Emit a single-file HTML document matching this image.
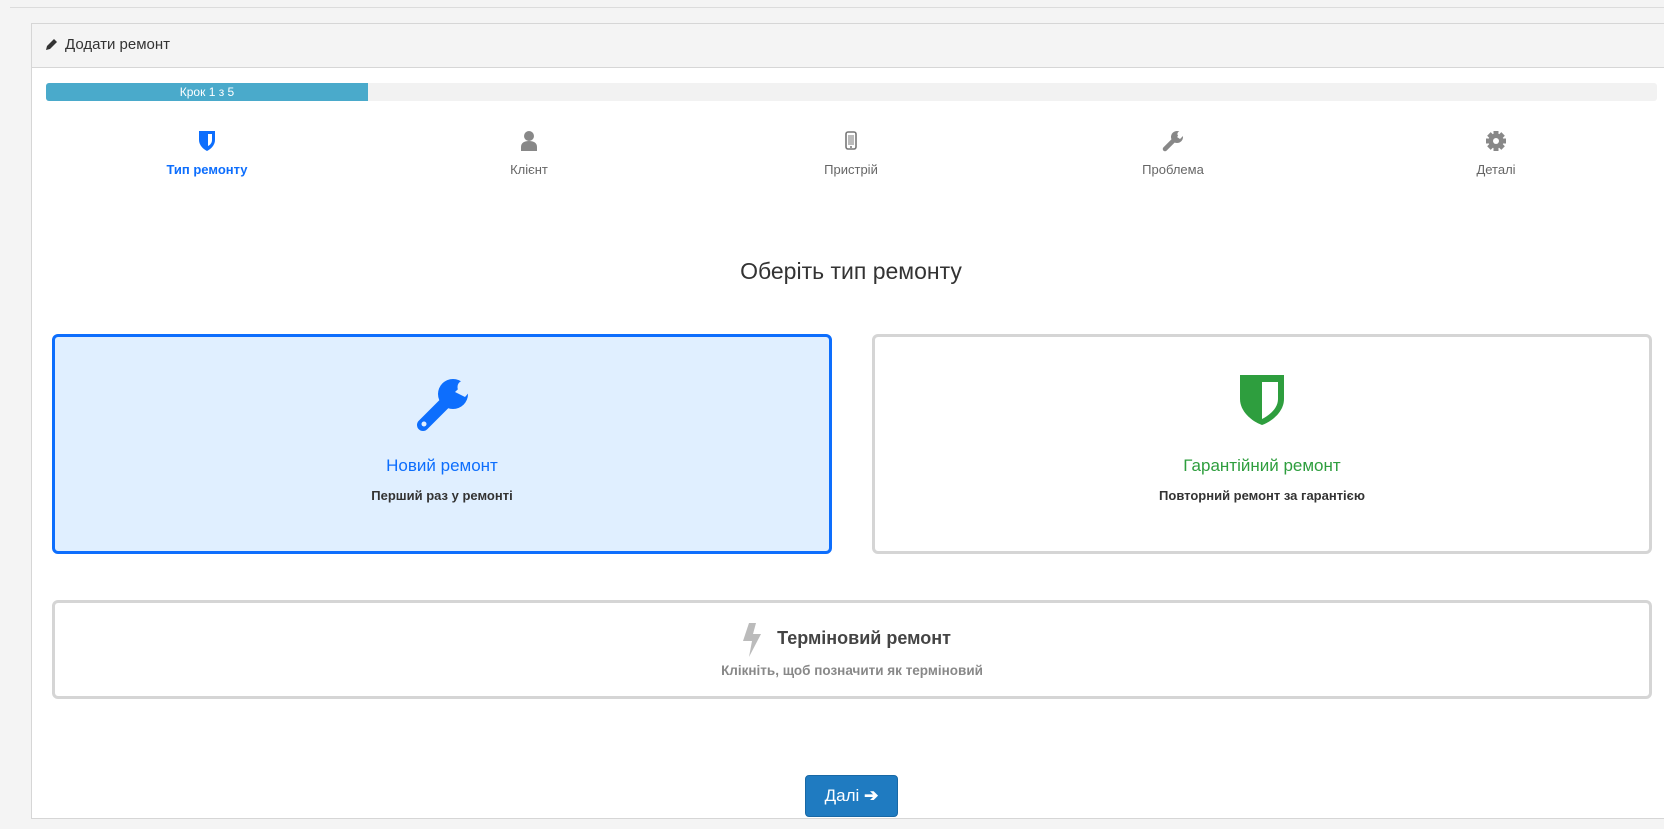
<!DOCTYPE html>
<html><head><meta charset="utf-8"><style>
*{box-sizing:border-box;margin:0;padding:0}
body{width:1664px;height:829px;background:#f4f4f4;font-family:"Liberation Sans",sans-serif;position:relative;overflow:hidden;color:#333}
.topline{position:absolute;left:10px;top:7px;right:0;height:1px;background:#dcdcdc}
.panel{position:absolute;left:31px;top:23px;width:1700px;height:796px;border:1px solid #d6d6d6;background:#fff}
.hdr{height:44px;background:#f4f4f4;border-bottom:1px solid #d6d6d6;font-size:15px;padding:12px 0 0 33px;color:#333}
.hdr svg{position:absolute;left:13px;top:14px}
.abs{position:absolute}
.prog{left:46px;top:83px;width:1611px;height:18px;background:#f2f2f2;border-radius:3px;overflow:hidden}
.prog div{width:322px;height:18px;background:#4aaacb;color:#fff;font-size:12px;text-align:center;line-height:18px}
.step{width:200px;text-align:center;font-size:13px;color:#666;top:130px}
.step svg{display:block;margin:0 auto 10px}
.title{left:0;width:1664px;top:258px;text-align:center;font-size:23px;color:#333;padding-left:38px}
.card{border:3px solid #d5d5d5;border-radius:6px;background:#fff;text-align:center}
.c1{left:52px;top:334px;width:780px;height:220px;background:#e0efff;border-color:#0d6efd}
.c2{left:872px;top:334px;width:780px;height:220px}
.c3{left:52px;top:600px;width:1600px;height:99px}
.ct{position:absolute;left:0;right:0;top:119px;font-size:17px}
.cs{position:absolute;left:0;right:0;top:151px;font-size:13px;font-weight:bold;color:#333}
.btn{left:805px;top:775px;width:93px;height:42px;background:#1f7bc1;border:1px solid #1868a5;border-radius:4px;color:#fff;font-size:17px;text-align:center;line-height:40px}
</style></head><body>
<div class="topline"></div>
<div class="panel"><div class="hdr"><svg width="13" height="13" viewBox="0 0 13 13"><path d="M1 12 L2 8 L9 1 L12 4 L5 11 Z" fill="#333"/></svg>Додати ремонт</div></div>
<div class="abs prog"><div>Крок 1 з 5</div></div>

<div class="abs step" style="left:107px;color:#0d6efd;font-weight:bold"><svg width="20" height="22" viewBox="0 0 20 22"><path d="M2 1h16v9c0 5-4 9-8 11C6 19 2 15 2 10z" fill="#0d6efd"/><path d="M11 4h4v6c0 3-2 5-4 6z" fill="#fff"/></svg>Тип ремонту</div>
<div class="abs step" style="left:429px"><svg width="20" height="22" viewBox="0 0 20 22"><circle cx="10" cy="6" r="5" fill="#888"/><path d="M2 21v-4c0-4 3-6 8-6s8 2 8 6v4z" fill="#888"/></svg>Клієнт</div>
<div class="abs step" style="left:751px"><svg width="20" height="22" viewBox="0 0 20 22"><rect x="5" y="2" width="10" height="17" rx="2" fill="none" stroke="#777" stroke-width="1.6"/><rect x="7" y="5" width="6" height="10" fill="#bbb"/><circle cx="10" cy="17" r="1" fill="#777"/></svg>Пристрій</div>
<div class="abs step" style="left:1073px"><svg width="22" height="22" viewBox="0 0 22 22"><path d="M3 19 L12 10" stroke="#888" stroke-width="4.5" stroke-linecap="round"/><circle cx="15" cy="7" r="6" fill="#888"/><path d="M15 7 L22 0 L22 5 L18 9z" fill="#fff"/><circle cx="18" cy="4" r="2.6" fill="#fff"/></svg>Проблема</div>
<div class="abs step" style="left:1396px"><svg width="22" height="22" viewBox="0 0 22 22"><g fill="#888" transform="translate(11 11)"><circle r="7.5"/><rect x="-2.5" y="-10" width="5" height="20"/><rect x="-10" y="-2.5" width="20" height="5"/><rect x="-2.5" y="-10" width="5" height="20" transform="rotate(45)"/><rect x="-2.5" y="-10" width="5" height="20" transform="rotate(-45)"/><circle r="3" fill="#fff"/></g></svg>Деталі</div>

<div class="abs title">Оберіть тип ремонту</div>

<div class="abs card c1">
<svg class="abs" style="left:358px;top:38px" width="60" height="58" viewBox="0 0 60 58"><path d="M10 50 L34 26" stroke="#0d6efd" stroke-width="12" stroke-linecap="round"/><circle cx="40" cy="19" r="15" fill="#0d6efd"/><path d="M42 17 L60 0 L60 13 L52 22z" fill="#e0efff"/><circle cx="51" cy="12" r="6.5" fill="#e0efff"/><circle cx="11" cy="49" r="2.5" fill="#e0efff"/></svg>
<div class="ct" style="color:#0d6efd">Новий ремонт</div><div class="cs">Перший раз у ремонті</div></div>

<div class="abs card c2">
<svg class="abs" style="left:364px;top:37px" width="46" height="52" viewBox="0 0 46 52"><path d="M1 1h44v24c0 12-11 22-22 26C12 47 1 37 1 25z" fill="#2e9e3e"/><path d="M23 8h16v17c0 9-8 16-16 20z" fill="#fff"/></svg>
<div class="ct" style="color:#2e9e3e">Гарантійний ремонт</div><div class="cs">Повторний ремонт за гарантією</div></div>

<div class="abs card c3">
<svg class="abs" style="left:686px;top:20px" width="22" height="34" viewBox="0 0 22 34"><path d="M8 0h7l-3 11h8L8 34l3-16H2z" fill="#bbb"/></svg>
<div class="abs" style="left:0;right:0;top:25px;font-size:18px;font-weight:bold;color:#444;padding-left:24px">Терміновий ремонт</div>
<div class="abs" style="left:0;right:0;top:60px;font-size:13.5px;font-weight:bold;color:#888">Клікніть, щоб позначити як терміновий</div></div>

<div class="abs btn"><b style="font-weight:normal">Далі</b> <b>➔</b></div>
</body></html>
